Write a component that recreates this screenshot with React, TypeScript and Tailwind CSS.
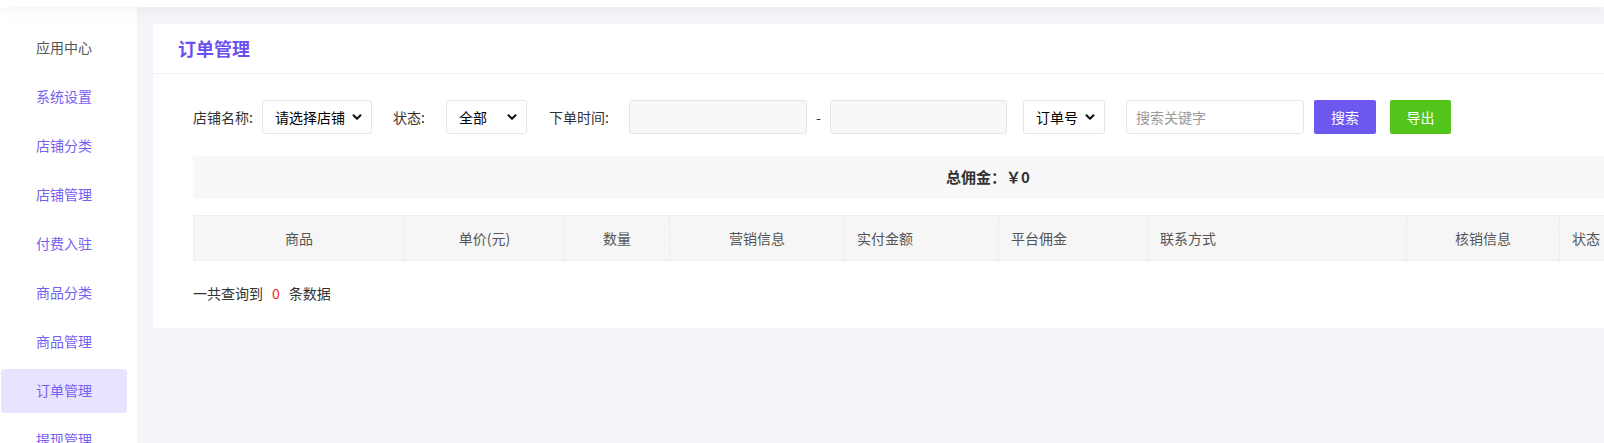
import { ChevronDown } from "lucide-react";

const menu = ["应用中心", "系统设置", "店铺分类", "店铺管理", "付费入驻", "商品分类", "商品管理", "订单管理", "提现管理"];

const cols: { label: string; cls: string }[] = [
  { label: "商品", cls: "w-[210px] justify-center" },
  { label: "单价(元)", cls: "w-[160px] justify-center" },
  { label: "数量", cls: "w-[105px] justify-center" },
  { label: "营销信息", cls: "w-[175px] justify-center" },
  { label: "实付金额", cls: "w-[154px] justify-start pl-[12px]" },
  { label: "平台佣金", cls: "w-[149px] justify-start pl-[12px]" },
  { label: "联系方式", cls: "w-[259px] justify-start pl-[12px]" },
  { label: "核销信息", cls: "w-[153px] justify-center" },
  { label: "状态", cls: "flex-1 justify-start pl-[12px]" },
];

function Sel({ text, cls }: { text: string; cls: string }) {
  return (
    <div
      className={`flex h-[34px] shrink-0 items-center justify-between rounded-[3px] border border-[#e6e6e6] bg-white pl-[12px] pr-[7px] text-[14px] text-black ${cls}`}
    >
      <span>{text}</span>
      <ChevronDown size={14} strokeWidth={3.5} className="text-[#111]" />
    </div>
  );
}

export default function App() {
  return (
    <div className="flex h-screen w-screen flex-col overflow-hidden bg-[#f4f5f9] font-['Noto_Sans_CJK_SC','Microsoft_YaHei',sans-serif] text-[#333]">
      <div className="relative z-10 h-[7px] shrink-0 bg-white shadow-[0_3px_14px_rgba(0,0,0,0.07)]" />
      <div className="flex min-h-0 flex-1">
        <aside className="flex w-[137px] shrink-0 flex-col gap-[5px] bg-white pl-[1px] pt-[19px]">
          {menu.map((m, i) => (
            <div
              key={m}
              className={`flex h-[44px] w-[126px] shrink-0 items-center rounded-[4px] pb-[2px] pl-[35px] text-[14px] ${
                i === 0 ? "text-[#555]" : "text-[#7460f0]"
              } ${i === 7 ? "bg-[#e8e4ff]" : ""}`}
            >
              {m}
            </div>
          ))}
        </aside>
        <main className="pl-[16px] pt-[17px]">
          <div className="w-[1670px] rounded-[4px] bg-white">
            <div className="flex h-[50px] items-center border-b border-[#f0f0f0] pl-[25px] text-[18px] font-bold text-[#6b4ff0]">
              订单管理
            </div>
            <div className="px-[40px] pb-[25px] pt-[26px]">
              <div className="flex h-[34px] items-center text-[14px]">
                <span className="w-[69px] shrink-0 text-[#333]">店铺名称:</span>
                <Sel text="请选择店铺" cls="w-[110px]" />
                <span className="ml-[21px] w-[53px] shrink-0 text-[#333]">状态:</span>
                <Sel text="全部" cls="w-[81px]" />
                <span className="ml-[22px] w-[80px] shrink-0 text-[#333]">下单时间:</span>
                <div className="h-[34px] w-[178px] shrink-0 rounded-[3px] border border-[#e6e6e6] bg-[#f8f8f8]" />
                <span className="w-[23px] shrink-0 text-center text-[#333]">-</span>
                <div className="h-[34px] w-[177px] shrink-0 rounded-[3px] border border-[#e6e6e6] bg-[#f8f8f8]" />
                <Sel text="订单号" cls="ml-[16px] w-[82px]" />
                <div className="ml-[21px] flex h-[34px] w-[178px] shrink-0 items-center rounded-[3px] border border-[#e6e6e6] bg-white pl-[9px] text-[#999]">
                  搜索关键字
                </div>
                <div className="ml-[10px] flex h-[34px] w-[62px] shrink-0 items-center justify-center rounded-[2px] bg-[#6c57ef] text-white">
                  搜索
                </div>
                <div className="ml-[14px] flex h-[34px] w-[61px] shrink-0 items-center justify-center rounded-[2px] bg-[#52c41a] text-white">
                  导出
                </div>
              </div>
              <div className="mt-[22px] flex h-[43px] items-center justify-center rounded-[2px] bg-[#f8f8f8] text-[15px] font-bold text-[#333]">
                总佣金：￥0
              </div>
              <div className="mt-[16px] flex h-[46px] border border-[#eeeeee] bg-[#f6f6f6] text-[14px] text-[#555]">
                {cols.map((c, i) => (
                  <div
                    key={c.label}
                    className={`flex h-full shrink-0 items-center ${c.cls} ${
                      i > 0 ? "border-l border-dashed border-[#e8e8e8]" : ""
                    }`}
                  >
                    {c.label}
                  </div>
                ))}
              </div>
              <div className="mt-[22px] flex h-[20px] items-center text-[14px] text-[#333]">
                <span>一共查询到</span>
                <span className="mx-[9px] text-[#ff2222]">0</span>
                <span>条数据</span>
              </div>
            </div>
          </div>
        </main>
      </div>
    </div>
  );
}
